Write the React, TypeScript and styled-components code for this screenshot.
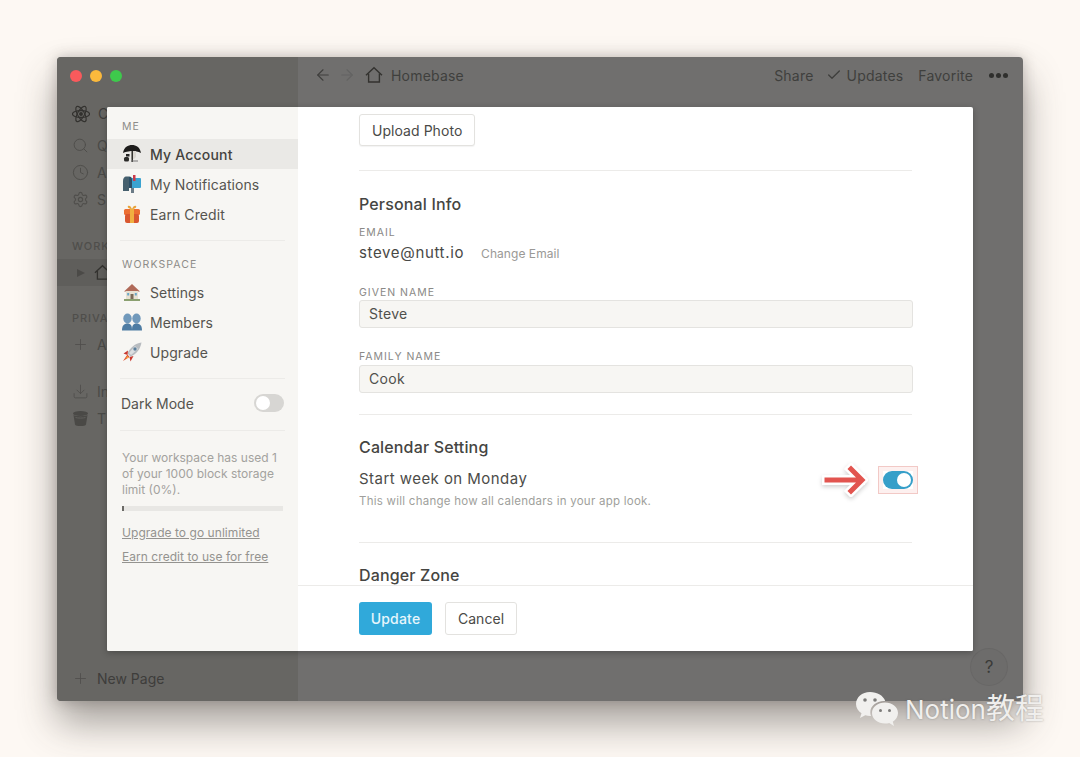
import React from 'react';
import styled, { createGlobalStyle } from 'styled-components';
import { ArrowLeft, ArrowRight, Check, Clock, Download, Plus, Search, Settings } from 'lucide-react';

const GlobalStyle = createGlobalStyle`
  html, body { margin: 0; padding: 0; }
  body { background: #fdf8f3; font-family: Inter, "Noto Sans CJK SC", sans-serif; color: #3f3f3c; }
`;

const Page = styled.div`
  position: relative;
  width: 1080px;
  height: 757px;
  padding: 57px;
  box-sizing: border-box;
  overflow: hidden;
  background: #fdf8f3;
`;

const Window = styled.div`
  position: relative;
  display: flex;
  width: 966px;
  height: 644px;
  border-radius: 4px;
  overflow: hidden;
  background: #706f6e;
`;

const WindowShadow = styled.div`
  position: absolute;
  left: 57px;
  top: 57px;
  width: 966px;
  height: 644px;
  border-radius: 4px;
  box-shadow: 0 22px 38px rgba(60, 55, 50, 0.45), 0 0 14px rgba(60, 55, 50, 0.28);
`;

const Side = styled.aside`
  display: flex;
  flex-direction: column;
  width: 241px;
  flex: none;
  background: #676663;
  padding: 0 0 9px;
  box-sizing: border-box;
`;

const Lights = styled.div`
  display: flex;
  gap: 8px;
  padding: 13px 13px 0;
  height: 25px;
  margin-bottom: 5px;
`;

const Light = styled.span<{ $c: string }>`
  width: 12px;
  height: 12px;
  border-radius: 50%;
  background: ${(p) => p.$c};
`;

const SideRow = styled.div<{ $active?: boolean; $mt?: number; $strong?: boolean }>`
  display: flex;
  align-items: center;
  gap: 8px;
  height: 27px;
  padding-left: 15px;
  margin-top: ${(p) => p.$mt ?? 0}px;
  font-size: 14px;
  color: ${(p) => (p.$strong ? '#3e3d3b' : '#4a4a47')};
  background: ${(p) => (p.$active ? '#5f5e5b' : 'transparent')};
  svg { flex: none; color: #4f4e4b; }
`;

const SideLabel = styled.div<{ $mt: number }>`
  padding-left: 15px;
  margin-top: ${(p) => p.$mt}px;
  height: 14px;
  line-height: 14px;
  font-size: 11px;
  letter-spacing: 0.9px;
  font-weight: 500;
  color: #4f4e4b;
`;

const Caret = styled.span`
  width: 0;
  height: 0;
  border-left: 8px solid #4b4a47;
  border-top: 4px solid transparent;
  border-bottom: 4px solid transparent;
  margin: 0 1px 0 5px;
`;

const Spacer = styled.div`
  flex: 1;
`;

const Main = styled.div`
  flex: 1;
  display: flex;
  flex-direction: column;
`;

const TopBar = styled.header`
  display: flex;
  align-items: center;
  height: 36px;
  padding: 0 15px 0 16px;
  color: #3f3f3d;
  font-size: 14px;
  letter-spacing: 0.2px;
`;

const Crumb = styled.span`
  margin-left: 8px;
`;

const TopActions = styled.div`
  margin-left: auto;
  display: flex;
  align-items: center;
  gap: 16px;
`;

const UpdatesItem = styled.span`
  display: flex;
  align-items: center;
  gap: 5px;
  margin: 0 -1px 0 -4px;
`;

const Dots = styled.span`
  display: flex;
  gap: 2px;
`;

const Dot = styled.i`
  width: 5px;
  height: 5px;
  border-radius: 50%;
  background: #2f2f2d;
`;

const HelpBubble = styled.div`
  position: absolute;
  right: 16px;
  bottom: 16px;
  width: 36px;
  height: 36px;
  border-radius: 50%;
  background: #6d6c6b;
  box-shadow: 0 0 0 1px #686766;
  display: flex;
  align-items: center;
  justify-content: center;
  font-size: 17px;
  color: #3a3a38;
`;

const Modal = styled.div`
  position: absolute;
  left: 50px;
  top: 50px;
  width: 866px;
  height: 544px;
  display: flex;
  background: #fff;
  border-radius: 2px;
  box-shadow: 0 2px 6px rgba(30, 30, 30, 0.35);
  overflow: hidden;
`;

const Menu = styled.nav`
  width: 191px;
  flex: none;
  background: #f7f6f3;
  box-sizing: border-box;
  padding-top: 13px;
  display: flex;
  flex-direction: column;
`;

const MenuLabel = styled.div`
  padding-left: 15px;
  height: 14px;
  line-height: 14px;
  font-size: 10.5px;
  letter-spacing: 1.1px;
  color: #8d8c88;
  margin-bottom: 5px;
`;

const MenuItem = styled.div<{ $active?: boolean }>`
  display: flex;
  align-items: center;
  gap: 8px;
  height: 30px;
  padding-left: 15px;
  font-size: 14px;
  letter-spacing: ${(p) => (p.$active ? 0.2 : 0.08)}px;
  color: ${(p) => (p.$active ? '#44433f' : '#55544f')};
  font-weight: ${(p) => (p.$active ? 500 : 400)};
  background: ${(p) => (p.$active ? '#eae9e6' : 'transparent')};
  svg { flex: none; }
`;

const MenuRule = styled.div<{ $mt: number; $mb: number }>`
  height: 1px;
  background: #ecebe8;
  margin: ${(p) => p.$mt}px 13px ${(p) => p.$mb}px 13px;
`;

const DarkRow = styled.div`
  display: flex;
  align-items: center;
  justify-content: space-between;
  padding: 0 14px;
  height: 18px;
  font-size: 14px;
  color: #55544f;
`;

const Toggle = styled.span<{ $on?: boolean }>`
  display: flex;
  justify-content: ${(p) => (p.$on ? 'flex-end' : 'flex-start')};
  align-items: center;
  box-sizing: border-box;
  width: 30px;
  height: 18px;
  padding: 2px;
  border-radius: 9px;
  background: ${(p) => (p.$on ? '#379fc9' : '#d7d6d3')};
  &::after {
    content: '';
    width: 14px;
    height: 14px;
    border-radius: 50%;
    background: #fff;
  }
`;

const UsageText = styled.p`
  margin: 0 10px 0 15px;
  font-size: 12px;
  line-height: 16px;
  color: #a3a29e;
`;

const Bar = styled.div`
  height: 5px;
  margin: 8px 15px 14px 15px;
  background: #e8e7e4;
`;

const BarFill = styled.div`
  height: 100%;
  background: #6b6a66;
`;

const MenuLink = styled.a`
  display: block;
  margin: 0 0 8px 15px;
  font-size: 12px;
  line-height: 16px;
  letter-spacing: 0.05px;
  color: #94938f;
  text-decoration: underline;
`;

const Content = styled.section`
  flex: 1;
  display: flex;
  flex-direction: column;
  min-width: 0;
`;

const Scroll = styled.div`
  flex: 1;
  overflow: hidden;
  padding: 7px 61px 0 61px;
`;

const GhostButton = styled.button`
  display: block;
  height: 32px;
  box-sizing: border-box;
  padding: 0 12px;
  background: #fff;
  border: 1px solid #e3e2df;
  border-radius: 3px;
  box-shadow: 0 1px 1px rgba(0, 0, 0, 0.05);
  font: 400 14px Inter, sans-serif;
  letter-spacing: 0.05px;
  color: #4a4a47;
`;

const Rule = styled.div<{ $mt: number; $mb: number }>`
  height: 1px;
  background: #ecebe9;
  margin: ${(p) => p.$mt}px 0 ${(p) => p.$mb}px;
`;

const Heading = styled.h3`
  margin: 0;
  font-size: 16px;
  line-height: 20px;
  font-weight: 500;
  letter-spacing: 0.15px;
  color: #454542;
`;

const FieldLabel = styled.div<{ $mt: number }>`
  margin-top: ${(p) => p.$mt}px;
  font-size: 10.5px;
  line-height: 14px;
  letter-spacing: 1px;
  color: #8a8986;
`;

const EmailRow = styled.div`
  display: flex;
  align-items: baseline;
  gap: 17px;
  height: 22px;
  margin-top: 3px;
`;

const EmailText = styled.span`
  font-size: 15px;
  letter-spacing: 0.65px;
  color: #484845;
`;

const ChangeEmail = styled.span`
  font-size: 12px;
  letter-spacing: 0.05px;
  color: #9a9996;
`;

const Input = styled.div<{ $mt: number }>`
  box-sizing: border-box;
  height: 28px;
  margin-top: ${(p) => p.$mt}px;
  margin-right: -1px;
  padding: 0 9px;
  line-height: 26px;
  border: 1px solid #e4e3e0;
  border-radius: 3px;
  background: #f7f6f3;
  font-size: 14px;
  letter-spacing: 0.3px;
  color: #50504c;
`;

const SettingRow = styled.div`
  display: flex;
  align-items: flex-start;
  justify-content: space-between;
  margin-top: 12px;
`;

const SettingTitle = styled.div`
  font-size: 15px;
  line-height: 20px;
  letter-spacing: 0.45px;
  color: #4c4c49;
`;

const SettingHint = styled.div`
  margin-top: 4px;
  font-size: 11.5px;
  line-height: 16px;
  letter-spacing: 0.25px;
  color: #a09f9c;
`;

const Annotated = styled.div`
  display: flex;
  align-items: center;
  margin-right: -1px;
  margin-top: -6px;
  gap: 15px;
`;

const HighlightBox = styled.span`
  display: block;
  box-shadow: 0 0 0 4px #fdf0ef, 0 0 0 5px #f2c9c6;
`;

const Footer = styled.footer`
  display: flex;
  gap: 13px;
  height: 66px;
  box-sizing: border-box;
  padding: 16px 61px 0;
  border-top: 1px solid #ecebe9;
  background: #fff;
`;

const PrimaryButton = styled.button`
  height: 33px;
  width: 73px;
  background: #30a9da;
  color: #e6f6fc;
  border: none;
  border-radius: 3px;
  font: 500 14px Inter, sans-serif;
  letter-spacing: 0.2px;
`;

const CancelButton = styled(GhostButton)`
  height: 33px;
  width: 72px;
  padding: 0;
  box-shadow: none;
`;

const Watermark = styled.div`
  position: absolute;
  left: 855px;
  top: 689px;
  display: flex;
  align-items: center;
  gap: 6px;
  font-size: 26px;
  line-height: 40px;
  color: #f0efed;
  text-shadow: 0 0 2px rgba(90, 90, 90, 0.5);
`;

const WatermarkCjk = styled.span`
  font-size: 29px;
`;

const Account = () => (
  <svg width="20" height="20" viewBox="0 0 20 20">
    <path d="M1 9C2 3 6 1 10 1s8 2 9 8c-3-1.500-6-2-8-2S4 7.500 1 9z" fill="#1d1c1b" />
    <path d="M9 7h5v6l-2 2H9z" fill="#d9d6d0" />
    <rect x="9.500" y="7" width="1.500" height="11" fill="#33322f" />
    <rect x="4" y="10" width="3.500" height="2.500" fill="#222" />
    <rect x="2" y="13" width="5" height="4.500" rx="1.500" fill="#2a2a28" />
    <path d="M9 17h7" stroke="#777" strokeWidth="1.200" />
  </svg>
);

const Mailbox = () => (
  <svg width="20" height="20" viewBox="0 0 20 20">
    <path d="M1 7c0-3 1.500-4.500 3-4.500h3V17H1z" fill="#46606e" />
    <rect x="9" y="4" width="10" height="10" rx="1" fill="#3ba3d0" />
    <path d="M7 2.500c2 0 3 1 3 3V14H7z" fill="#2d4f66" />
    <rect x="11" y="1" width="2.500" height="6" fill="#c9394a" />
    <rect x="9" y="14" width="3" height="5" fill="#6b7b86" />
  </svg>
);

const Gift = () => (
  <svg width="20" height="20" viewBox="0 0 20 20">
    <rect x="2" y="5" width="16" height="6" rx="1.500" fill="#ec6f32" />
    <rect x="3" y="10" width="14" height="9" rx="2" fill="#d9572f" />
    <rect x="8" y="5" width="4" height="14" fill="#f0b040" />
    <path d="M10 5C7 5 5 3 6 2s3 0 4 3c1-3 3-4 4-3s-1 3-4 3z" fill="#e9a33a" />
  </svg>
);

const House = () => (
  <svg width="20" height="20" viewBox="0 0 20 20">
    <path d="M10 2 2 9.500h16z" fill="#b06a58" />
    <rect x="4" y="9" width="12" height="8" fill="#e8e1d2" />
    <rect x="8.500" y="12" width="3" height="5" fill="#7a6b58" />
    <rect x="5.200" y="11" width="2" height="2.500" fill="#6aa8c9" />
    <rect x="12.800" y="11" width="2" height="2.500" fill="#6aa8c9" />
    <rect x="2" y="17" width="16" height="2" fill="#8ba070" />
  </svg>
);

const People = () => (
  <svg width="20" height="20" viewBox="0 0 20 20">
    <g fill="#7199bb">
      <ellipse cx="5.500" cy="6.500" rx="4.200" ry="5" />
      <ellipse cx="14.500" cy="6.500" rx="4.200" ry="5" />
    </g>
    <g fill="#4e7ca3">
      <path d="M0 18.500c0-5 2-7 5.500-7s4.500 2 4.500 7z" />
      <path d="M10 18.500c0-5 1-7 4.500-7s5.500 2 5.500 7z" />
    </g>
  </svg>
);

const Rocket = () => (
  <svg width="20" height="20" viewBox="0 0 20 20">
    <path d="M19.500 .5C13 1.500 8 5.500 5.500 11.500l3 3C14.500 12 18.500 7 19.500 .5z" fill="#b8bcc0" />
    <path d="M13 4 7 11l2 2 7-6z" fill="#dcdfe1" />
    <path d="M6 8.500 1.500 11.500l4 1.500zM11.500 14l-4 1 1 4.500z" fill="#c8382f" />
    <circle cx="13" cy="7" r="1.700" fill="#5c7f9a" />
    <path d="M5.500 12.500 1 19l6.500-4z" fill="#e0502f" />
    <path d="M5.500 14 3.500 17l3-1.500z" fill="#f4b63f" />
  </svg>
);

const RedArrow = () => (
  <svg width="46" height="34" viewBox="0 0 46 34" style={{ filter: 'drop-shadow(0 2px 2px rgba(0,0,0,.18))' }}>
    <g fill="none" strokeLinecap="square" strokeLinejoin="miter">
      <path d="M5 17h33M29 6l11 11-11 11" stroke="#fff" strokeWidth="10" />
      <path d="M5 17h33M29 6l11 11-11 11" stroke="#e2544f" strokeWidth="5" />
    </g>
  </svg>
);

const WeChat = () => (
  <svg width="44" height="38" viewBox="0 0 44 38">
    <path d="M15 1C7 1 1 6.500 1 13c0 4 2.200 7 5.500 9.300L5 27l5.300-2.700c1.600.4 3 .7 4.700.7h1c-.5-1.300-.7-2.500-.7-3.800C15.300 15 21.500 10 29 10h1.200C28.500 4.800 22.300 1 15 1z" fill="#f1f0ee" />
    <path d="M43 22c0-6-6-10.500-13-10.500S17 16 17 22s6 10.500 13 10.500c1.500 0 2.800-.3 4.200-.6L39 35l-1.200-4.200C41 28.700 43 25.500 43 22z" fill="#f1f0ee" />
    <circle cx="10" cy="9" r="1.800" fill="#7c7b79" />
    <circle cx="20" cy="9" r="1.800" fill="#7c7b79" />
    <circle cx="25.500" cy="19.500" r="1.500" fill="#7c7b79" />
    <circle cx="34.500" cy="19.500" r="1.500" fill="#7c7b79" />
  </svg>
);

const Atom = () => (
  <svg width="18" height="20" viewBox="0 0 20 22" fill="none" stroke="#33322f" strokeWidth="1.300">
    <ellipse cx="10" cy="11" rx="9.500" ry="3.800" />
    <ellipse cx="10" cy="11" rx="9.500" ry="3.800" transform="rotate(60 10 11)" />
    <ellipse cx="10" cy="11" rx="9.500" ry="3.800" transform="rotate(120 10 11)" />
    <circle cx="10" cy="11" r="1.500" fill="#33322f" />
  </svg>
);

const HomeGlyph = ({ size }: { size: number }) => (
  <svg width={size} height={size} viewBox="0 0 18 18" fill="none" stroke="#33322f" strokeWidth="1.400" strokeLinejoin="miter">
    <path d="M1 9.200 9 1.800l8 7.400" />
    <path d="M3.600 7.500V16h10.800V7.500" />
  </svg>
);

const TrashCan = () => (
  <svg width="17" height="17" viewBox="0 0 17 17">
    <ellipse cx="8.500" cy="3.500" rx="7.500" ry="2.500" fill="#4a4946" />
    <path d="M1.500 5c2 1.600 12 1.600 14 0l-1.500 9.500c-.4 2-10.600 2-11 0z" fill="#4a4946" />
    <path d="M3.500 7.500c2 .8 8 .8 10 0" stroke="#605f5c" fill="none" />
  </svg>
);

export default function App() {
  return (
    <Page>
      <GlobalStyle />
      <WindowShadow />
      <Window>
        <Side>
          <Lights>
            <Light $c="#f95a5c" />
            <Light $c="#fbb93c" />
            <Light $c="#3ec94c" />
          </Lights>
          <SideRow $strong>
            <Atom />
            <span>C</span>
          </SideRow>
          <SideRow $mt={5}>
            <Search size={17} strokeWidth={1.4} />
            <span>Q</span>
          </SideRow>
          <SideRow>
            <Clock size={17} strokeWidth={1.4} />
            <span>A</span>
          </SideRow>
          <SideRow>
            <Settings size={17} strokeWidth={1.6} />
            <span>S</span>
          </SideRow>
          <SideLabel $mt={26}>WORK</SideLabel>
          <SideRow $active $mt={6}>
            <Caret />
            <HomeGlyph size={17} />
          </SideRow>
          <SideLabel $mt={25}>PRIVA</SideLabel>
          <SideRow $mt={6}>
            <Plus size={17} strokeWidth={1.2} />
            <span>A</span>
          </SideRow>
          <SideRow $mt={20}>
            <Download size={17} strokeWidth={1.2} />
            <span>In</span>
          </SideRow>
          <SideRow>
            <TrashCan />
            <span>T</span>
          </SideRow>
          <Spacer />
          <SideRow $strong>
            <Plus size={17} strokeWidth={1.2} />
            <span>New Page</span>
          </SideRow>
        </Side>
        <Main>
          <TopBar>
            <ArrowLeft size={18} strokeWidth={1.5} />
            <ArrowRight size={18} strokeWidth={1.5} color="#636362" style={{ marginLeft: 6, marginRight: 9 }} />
            <HomeGlyph size={18} />
            <Crumb>Homebase</Crumb>
            <TopActions>
              <span>Share</span>
              <UpdatesItem>
                <Check size={16} />
                Updates
              </UpdatesItem>
              <span>Favorite</span>
              <Dots>
                <Dot />
                <Dot />
                <Dot />
              </Dots>
            </TopActions>
          </TopBar>
          <HelpBubble>?</HelpBubble>
        </Main>
        <Modal>
          <Menu>
            <MenuLabel>ME</MenuLabel>
            <MenuItem $active>
              <Account />
              My Account
            </MenuItem>
            <MenuItem>
              <Mailbox />
              My Notifications
            </MenuItem>
            <MenuItem>
              <Gift />
              Earn Credit
            </MenuItem>
            <MenuRule $mt={11} $mb={17} />
            <MenuLabel>WORKSPACE</MenuLabel>
            <MenuItem>
              <House />
              Settings
            </MenuItem>
            <MenuItem>
              <People />
              Members
            </MenuItem>
            <MenuItem>
              <Rocket />
              Upgrade
            </MenuItem>
            <MenuRule $mt={11} $mb={15} />
            <DarkRow>
              Dark Mode
              <Toggle />
            </DarkRow>
            <MenuRule $mt={18} $mb={19} />
            <UsageText>Your workspace has used 1 of your 1000 block storage limit (0%).</UsageText>
            <Bar>
              <BarFill style={{ width: 2 }} />
            </Bar>
            <MenuLink>Upgrade to go unlimited</MenuLink>
            <MenuLink>Earn credit to use for free</MenuLink>
          </Menu>
          <Content>
            <Scroll>
              <GhostButton>Upload Photo</GhostButton>
              <Rule $mt={24} $mb={23} />
              <Heading>Personal Info</Heading>
              <FieldLabel $mt={12}>EMAIL</FieldLabel>
              <EmailRow>
                <EmailText>steve@nutt.io</EmailText>
                <ChangeEmail>Change Email</ChangeEmail>
              </EmailRow>
              <FieldLabel $mt={21}>GIVEN NAME</FieldLabel>
              <Input $mt={0}>Steve</Input>
              <FieldLabel $mt={22}>FAMILY NAME</FieldLabel>
              <Input $mt={1}>Cook</Input>
              <Rule $mt={21} $mb={22} />
              <Heading>Calendar Setting</Heading>
              <SettingRow>
                <div>
                  <SettingTitle>Start week on Monday</SettingTitle>
                  <SettingHint>This will change how all calendars in your app look.</SettingHint>
                </div>
                <Annotated>
                  <RedArrow />
                  <HighlightBox>
                    <Toggle $on />
                  </HighlightBox>
                </Annotated>
              </SettingRow>
              <Rule $mt={33} $mb={22} />
              <Heading>Danger Zone</Heading>
            </Scroll>
            <Footer>
              <PrimaryButton>Update</PrimaryButton>
              <CancelButton>Cancel</CancelButton>
            </Footer>
          </Content>
        </Modal>
      </Window>
      <Watermark>
        <WeChat />
        <span>
          Notion<WatermarkCjk>教程</WatermarkCjk>
        </span>
      </Watermark>
    </Page>
  );
}
